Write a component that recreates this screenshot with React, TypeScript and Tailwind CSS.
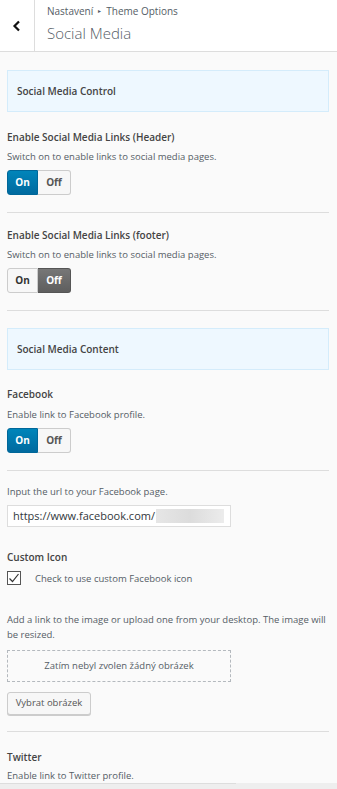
import React from "react";

const font = { fontFamily: '"Open Sans", "Noto Sans", sans-serif' };

function Toggle({ on }: { on: boolean }) {
  return (
    <div className="flex h-[25px] w-[64px] text-[10px] font-bold">
      <div
        className={
          on
            ? "flex w-[31px] items-center justify-center rounded-l-[3px] border border-[#006799] bg-gradient-to-b from-[#0085ba] to-[#006a9f] text-white"
            : "flex w-[31px] items-center justify-center rounded-l-[3px] border border-[#cccccc] bg-[#f7f7f7] text-[#333]"
        }
      >
        On
      </div>
      <div
        className={
          on
            ? "flex flex-1 items-center justify-center rounded-r-[3px] border border-l-0 border-[#cccccc] bg-[#f7f7f7] text-[#555]"
            : "flex flex-1 items-center justify-center rounded-r-[3px] border border-l-0 border-[#555] bg-gradient-to-b from-[#777] to-[#5e5e5e] text-white"
        }
      >
        Off
      </div>
    </div>
  );
}

function SectionBox({ title }: { title: string }) {
  return (
    <div className="flex h-[42px] items-center border border-[#d4ecfb] bg-[#eef8ff] pl-[9px] text-[10px] font-semibold text-[#444]">
      {title}
    </div>
  );
}

function Divider() {
  return <div className="h-px bg-[#dddddd]" />;
}

const label = "text-[10px] font-semibold leading-[14px] text-[#444]";
const desc = "text-[9.5px] leading-[13px]";

export default function App() {
  return (
    <div style={font} className="relative h-[789px] w-[337px] overflow-hidden bg-[#fafafa] text-[#555d66]">
      {/* header */}
      <div className="flex h-[52px] border-b border-[#dddddd] bg-white">
        <div className="flex w-[35px] items-center justify-center border-r border-[#dddddd]">
          <svg width="10" height="12" viewBox="0 0 10 12">
            <path d="M7 1.5 L2.5 6 L7 10.5" fill="none" stroke="#111" strokeWidth="2.2" />
          </svg>
        </div>
        <div className="flex flex-col pl-[12px] pt-[4px]">
          <div className="flex items-center gap-[5px] text-[10px] leading-[14px] text-[#555d66]">
            <span>Nastavení</span>
            <span className="text-[6px]">▸</span>
            <span>Theme Options</span>
          </div>
          <div className="mt-[5px] text-[15px] font-light leading-[20px] text-[#555d66]">Social Media</div>
        </div>
      </div>

      <div className="px-[7px] pr-[8px]">
        <div className="mt-[18px]">
          <SectionBox title="Social Media Control" />
        </div>

        <div className={"mt-[18px] " + label}>Enable Social Media Links (Header)</div>
        <div className={"mt-[6px] " + desc}>Switch on to enable links to social media pages.</div>
        <div className="mt-[7px]">
          <Toggle on />
        </div>
        <div className="mt-[17px]">
          <Divider />
        </div>

        <div className={"mt-[15px] " + label}>Enable Social Media Links (footer)</div>
        <div className={"mt-[6px] " + desc}>Switch on to enable links to social media pages.</div>
        <div className="mt-[7px]">
          <Toggle on={false} />
        </div>
        <div className="mt-[17px]">
          <Divider />
        </div>

        <div className="mt-[17px]">
          <SectionBox title="Social Media Content" />
        </div>

        <div className={"mt-[17px] " + label}>Facebook</div>
        <div className={"mt-[7px] " + desc}>Enable link to Facebook profile.</div>
        <div className="mt-[7px]">
          <Toggle on />
        </div>
        <div className="mt-[17px]">
          <Divider />
        </div>

        <div className={"mt-[14px] " + desc}>Input the url to your Facebook page.</div>
        <div className="mt-[7px] flex h-[22px] w-[224px] items-center border border-[#dddddd] bg-white pl-[5px] text-[11px] text-[#32373c]">
          <span>https://www.facebook.com/</span>
          <span className="ml-[1px] h-[14px] w-[68px] bg-gradient-to-r from-[#e6e6e6] via-[#dcdcdc] to-[#ececec]" />
        </div>

        <div className={"mt-[23px] " + label}>Custom Icon</div>
        <div className="mt-[7px] flex items-center">
          <div className="flex h-[14px] w-[14px] items-center justify-center border border-[#555] bg-white">
            <svg width="12" height="12" viewBox="0 0 12 12">
              <path d="M1.5 6.5 L4.5 9.5 L10.5 2" fill="none" stroke="#333" strokeWidth="1.2" />
            </svg>
          </div>
          <span className={"ml-[14px] " + desc}>Check to use custom Facebook icon</span>
        </div>

        <div className="mt-[27px] text-[9.5px] leading-[15px]">
          Add a link to the image or upload one from your desktop. The image will be resized.
        </div>
        <div className="mt-[8px] flex h-[32px] w-[224px] items-center justify-center border border-dashed border-[#b4b9be] text-[9.5px] text-[#555d66]">
          Zatím nebyl zvolen žádný obrázek
        </div>
        <div className="mt-[10px] flex h-[23px] w-[84px] items-center justify-center rounded-[3px] border border-[#cccccc] bg-[#f7f7f7] text-[9.5px] text-[#555] shadow-[0_1px_0_#ccc]">
          Vybrat obrázek
        </div>
        <div className="mt-[16px]">
          <Divider />
        </div>

        <div className={"mt-[18px] " + label}>Twitter</div>
        <div className={"mt-[5px] " + desc}>Enable link to Twitter profile.</div>
      </div>

      {/* bottom bar */}
      <div className="absolute bottom-0 left-0 right-0 h-[6px] bg-[#eeeeee]">
        <div className="h-px w-[236px] bg-[#dddddd]" />
      </div>
    </div>
  );
}
